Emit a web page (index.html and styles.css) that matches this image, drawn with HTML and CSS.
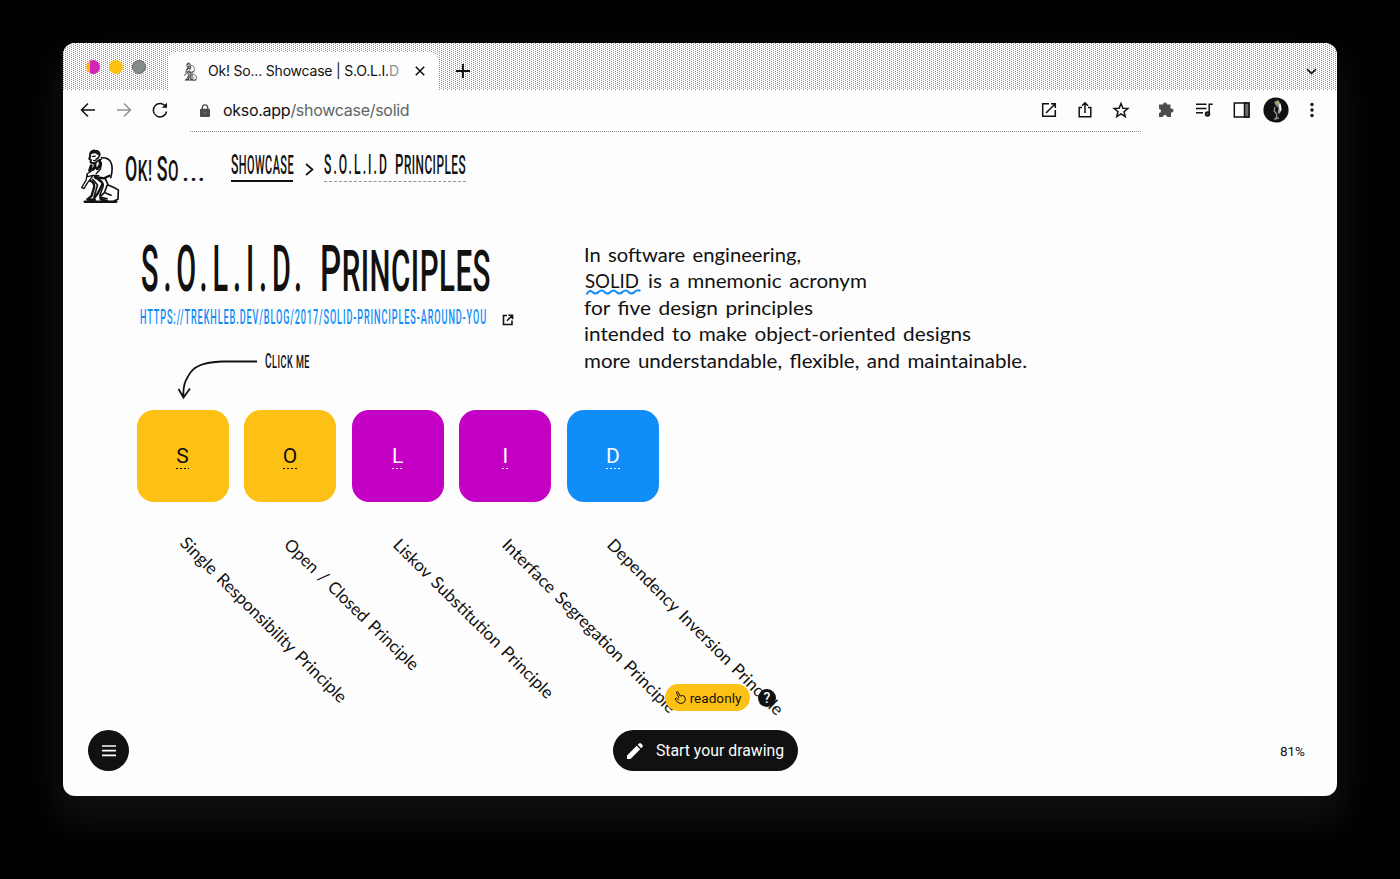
FILE: index.html
```html
<!DOCTYPE html>
<html lang="en">
<head>
<meta charset="utf-8">
<title>Ok! So... Showcase | S.O.L.I.D</title>
<link rel="stylesheet" href="styles.css">
</head>
<body>
<svg class="defs" width="0" height="0" aria-hidden="true">
  <symbol id="thinker" viewBox="32 22 118 168">
    <g fill="none" stroke="#111" stroke-linecap="round" stroke-linejoin="round">
      <path stroke-width="6" d="M59 45c-2-10 6-17 15-16 11 0 16 7 14 15M63 37c7-4 15-3 20 2M60 45l-3 9 5 3-1 8 8 2"/>
      <path stroke-width="4" d="M67 47l8-1M88 44c-2 8-5 10-11 12M70 59l9 2M94 55c-7 2-14 5-18 13"/>
      <path stroke-width="5" d="M94 51c15-1 24 4 29 15 5 13 4 28-1 45"/>
      <path stroke-width="9" d="M73 68c3 7 2 14-5 18M88 60c5 8 2 17-7 24M63 75l-5 14"/>
      <path stroke-width="4" d="M94 68l-3 17-13 14M64 91l-14 9 2 8 17-4 17 1M50 101l-2 16-14 24 7 3 11-18 14-18"/>
      <path stroke-width="7" d="M118 105l-16 8-28-4M76 112c14 5 20 9 21 18l-14 28-12 16M59 120c8 3 14 9 13 19l-8 27-12 11"/>
      <path stroke-width="5" d="M85 119c12 6 18 13 13 21l-9 24M67 116l15 17-10 34M105 113l9 20 16 7 15 8-1 28-11 5M111 134l-8 22 20 8M101 158l-12 12 22 5"/>
      <path stroke-width="7" d="M43 184h96M52 176l22 2M91 175l22 8"/>
    </g>
  </symbol>
</svg>

<main class="window">
  <div class="tabstrip">
    <div class="lights"><i class="light close"></i><i class="light min"></i><i class="light max"></i></div>
    <div class="tab">
      <svg class="favicon" width="13" height="19"><use href="#thinker"/></svg>
      <span class="tab-title">Ok! So... Showcase | S.O.L.I.<span class="faded">D</span></span>
      <svg class="tab-close" width="10" height="10" viewBox="0 0 10 10"><path d="M.8.8l8.4 8.4M9.2.8L.8 9.2" stroke="#111" stroke-width="1.6"/></svg>
    </div>
    <svg class="new-tab" width="14" height="14" viewBox="0 0 14 14"><path d="M7 0v14M0 7h14" stroke="#111" stroke-width="1.9"/></svg>
    <svg class="tab-menu" width="11" height="7" viewBox="0 0 11 7"><path d="M1 1l4.5 4.5L10 1" fill="none" stroke="#111" stroke-width="1.7"/></svg>
  </div>

  <div class="toolbar">
    <svg class="icon" width="16" height="16" viewBox="0 0 16 16"><path d="M15 8H2M8 1.500L1.500 8 8 14.500"/></svg>
    <svg class="icon dim" width="16" height="16" viewBox="0 0 16 16"><path d="M1 8h13M8 1.500L14.500 8 8 14.500"/></svg>
    <svg class="icon" width="16" height="16" viewBox="0 0 16 16"><path d="M13.900 5A6.700 6.700 0 1 0 14.600 9.500"/><path d="M15 .8v5H9.800z" fill="#111" stroke="none"/></svg>
    <svg class="lock" width="10" height="13" viewBox="0 0 10 13"><path d="M2.300 6V3.500a2.700 2.700 0 0 1 5.400 0V6" fill="none" stroke="#4a4e4e" stroke-width="1.300"/><rect y="4.700" width="10" height="8.300" rx="1" fill="#4a4e4e"/><circle cx="5" cy="8.800" r="1.100" fill="#777"/></svg>
    <span class="url">okso.app<span class="path">/showcase/solid</span></span>
    <div class="actions">
      <svg class="icon" width="16" height="16" viewBox="0 0 16 16"><path d="M8 1.700H1.700v12.600h12.600V8M10 1.700h4.300V6M14.300 1.700L5 11"/></svg>
      <svg class="icon" width="16" height="16" viewBox="0 0 16 16"><path d="M5 5.500H2.200v9.300h11.600V5.500H11M8 11V1M5 3.800L8 .9l3 2.900"/></svg>
      <svg class="icon" width="16" height="16" viewBox="0 0 16 16"><path d="M8 1.500l1.900 4.700 5 .3-3.900 3.200 1.300 4.900L8 11.900l-4.300 2.700L5 9.700 1.100 6.500l5-.3z"/></svg>
      <svg class="puzzle" width="18" height="18" viewBox="0 0 18 18"><path d="M6 3.500a2 2 0 0 1 4 0h3.500V7.500h1a2 2 0 0 1 0 4l-.5.200V16h-4a2 2 0 0 0-4 0H2v-4a2 2 0 0 0 0-4V3.500z" fill="#4a4e4e"/></svg>
      <svg class="icon" width="18" height="16" viewBox="0 0 18 16"><path d="M1 2.200h10.500M1 6.500h10.500M1 10.800h7M14.200 12V2.200h3.500"/><circle cx="12.500" cy="12" r="2" fill="#4a4e4e"/></svg>
      <svg class="icon" width="17" height="16" viewBox="0 0 17 16"><path d="M1.300 1h14.500v14H1.300z"/><path d="M11.500 1h4.500v14h-4.500z" fill="#6a7070"/></svg>
      <svg class="avatar" width="26" height="26" viewBox="0 0 26 26"><circle cx="13" cy="13" r="12.600" fill="#111"/><path d="M11 5l4-2 3 4 .5 6-2 4-2-1 1-5-3-3z" fill="#8d9494"/><path d="M16 7l2 1 .3 5-1.500 2z" fill="#fdfdfd"/><path d="M12 10l-1 4 2 2 1 3-2 3 4-1" fill="none" stroke="#8d9494" stroke-width="1.300"/><path d="M14 5.500l2 .8" stroke="#fdc014"/></svg>
      <svg class="more" width="4" height="16" viewBox="0 0 4 16"><g fill="#111"><circle cx="2" cy="2.500" r="1.700"/><circle cx="2" cy="8" r="1.700"/><circle cx="2" cy="13.500" r="1.700"/></g></svg>
    </div>
  </div>
  <div class="rule"></div>

  <section class="page">
    <header class="crumbs">
      <svg width="39" height="56"><use href="#thinker"/></svg>
      <svg class="brand lettering" width="84" height="44"><text x="1" y="31" textLength="54" lengthAdjust="spacingAndGlyphs"><tspan font-size="35">O</tspan><tspan font-size="30">K! </tspan><tspan font-size="35">S</tspan><tspan font-size="30">O</tspan></text><text x="58" y="31" font-size="26" textLength="24">...</text></svg>
      <a class="crumb current"><svg class="lettering" width="62" height="26"><text x="0" y="24" textLength="63" lengthAdjust="spacingAndGlyphs"><tspan font-size="28">S</tspan><tspan font-size="25">HOWCASE</tspan></text></svg></a>
      <svg class="chevron" width="9" height="13" viewBox="0 0 9 13"><path d="M1 1l6.500 5.500L1 12" fill="none" stroke="#111" stroke-width="1.700"/></svg>
      <a class="crumb dotted"><svg class="lettering" width="142" height="26"><text class="initials" x="0" y="24" font-size="28" textLength="65" lengthAdjust="spacingAndGlyphs">S.O.L.I.D</text><text x="71" y="24" textLength="71" lengthAdjust="spacingAndGlyphs"><tspan font-size="28">P</tspan><tspan font-size="25">RINCIPLES</tspan></text></svg></a>
    </header>

    <div class="canvas">
      <svg class="drawing" width="1274" height="665" viewBox="63 131 1274 665">
        <g class="lettering">
          <text class="initials" x="141" y="291" font-size="65" textLength="166" lengthAdjust="spacingAndGlyphs">S.O.L.I.D.</text>
          <text x="320" y="291" textLength="171" lengthAdjust="spacingAndGlyphs"><tspan font-size="65">P</tspan><tspan font-size="58">RINCIPLES</tspan></text>
          <text class="link" x="140" y="324" font-size="20.500" textLength="347" lengthAdjust="spacingAndGlyphs">HTTPS://TREKHLEB.DEV/BLOG/2017/SOLID-PRINCIPLES-AROUND-YOU</text>
          <text x="265" y="368" textLength="45" lengthAdjust="spacingAndGlyphs"><tspan font-size="20">C</tspan><tspan font-size="18">LICK ME</tspan></text>
        </g>
        <g fill="none" stroke="#111" stroke-width="1.600">
          <path d="M507 315.500h-3.500v9h8.500v-4M508.500 315.200h4v4M512.500 315.200l-5.500 5.500"/>
          <path d="M257 361.500h-35c-18 1-29 4-34 15-4 6-5 13-4.500 20M178.500 389l5 8.500 6.500-9" stroke-width="1.800"/>
        </g>
        <g class="hand">
          <text x="584" y="262" textLength="217" lengthAdjust="spacingAndGlyphs">In software engineering,</text>
          <text x="585" y="288" textLength="54" lengthAdjust="spacingAndGlyphs">SOLID</text>
          <text x="648" y="288" textLength="219" lengthAdjust="spacingAndGlyphs">is a mnemonic acronym</text>
          <text x="584" y="314.500" textLength="229" lengthAdjust="spacingAndGlyphs">for five design principles</text>
          <text x="584" y="341" textLength="387" lengthAdjust="spacingAndGlyphs">intended to make object-oriented designs</text>
          <text x="584" y="367.500" textLength="443" lengthAdjust="spacingAndGlyphs">more understandable, flexible, and maintainable.</text>
        </g>
        <path class="squiggle" d="M586.500 294.500q3-5.500 6-2.500t6 0 6 0 6 0 6 0 6 0 6 0 6 0 6-1"/>
        <g class="hand slanted">
          <text transform="translate(179 544) rotate(44.800)" textLength="227" lengthAdjust="spacingAndGlyphs">Single Responsibility Principle</text>
          <text transform="translate(283 546) rotate(44.200)" textLength="180" lengthAdjust="spacingAndGlyphs">Open / Closed Principle</text>
          <text transform="translate(392 546) rotate(44.800)" textLength="218" lengthAdjust="spacingAndGlyphs">Liskov Substitution Principle</text>
          <text transform="translate(501 546) rotate(45)" textLength="238" lengthAdjust="spacingAndGlyphs">Interface Segregation Principle</text>
          <text transform="translate(606 546) rotate(45)" textLength="241" lengthAdjust="spacingAndGlyphs">Dependency Inversion Principle</text>
        </g>
      </svg>
      <div class="cards">
        <a class="card yellow"><span>S</span></a>
        <a class="card yellow"><span>O</span></a>
        <a class="card purple"><span>L</span></a>
        <a class="card purple"><span>I</span></a>
        <a class="card blue"><span>D</span></a>
      </div>
    </div>

    <div class="status">
      <span class="readonly"><svg width="12" height="13" viewBox="0 0 12 13"><path d="M5 7L2.700 2.300q-.8-1.200.3-1.500t1.300.7L6 5q2.500-1 4.500.300 1 2 .7 4.200-1 3-4.500 3-3.200 0-5.700-4.500L2.300 7 5 9" fill="none" stroke="#111"/></svg>readonly</span>
      <span class="help">?</span>
    </div>
    <footer class="controls">
      <span class="menu"><svg width="14" height="12" viewBox="0 0 14 12"><path d="M0 1h14M0 5.700h14M0 10.400h14" stroke="#fdfdfd" stroke-width="1.700"/></svg></span>
      <span class="start"><svg width="16" height="16" viewBox="0 0 16 16"><path d="M0 16v-3.500L9.700 2.800l3.500 3.500L3.500 16zM10.700 1.800L12 .5q1-.8 2 0L15.500 2q.8 1 0 2l-1.300 1.300z" fill="#fdfdfd"/></svg>Start your drawing</span>
      <span class="zoom">81%</span>
    </footer>
  </section>
</main>
</body>
</html>
```

FILE: styles.css
```css
* { box-sizing: border-box; }

body {
  margin: 0;
  height: 879px;
  padding: 43px 63px 83px;
  overflow: hidden;
  background: #000;
  color: #111;
  font-family: Roboto, sans-serif;
}

svg { display: block; flex: none; overflow: visible; }
.defs { position: absolute; }

.window {
  height: 753px;
  display: flex;
  flex-direction: column;
  border-radius: 12px;
  overflow: hidden;
  background: #fdfdfd;
  box-shadow: 0 20px 34px 8px #101010;
}

.tabstrip {
  height: 47px;
  flex: none;
  display: flex;
  align-items: center;
  padding: 0 20px 0 23px;
  background-color: #fdfdfd;
  background-image:
    conic-gradient(from 270deg at 1px 1px, #8d9494 90deg, transparent 0),
    conic-gradient(from 270deg at 1px 1px, #8d9494 90deg, transparent 0);
  background-size: 4px 2px, 4px 2px;
  background-position: 0 0, 2px 1px;
}

.lights { display: flex; gap: 9px; width: 82px; }
.light { width: 14px; height: 14px; border-radius: 50%; }
.close { background: linear-gradient(90deg, #fdb52c 4px, #d426b4 4px); }
.min { background: #fdc014; }
.max { background: #858c8c; border: 1px solid #606666; }

.tab {
  align-self: flex-end;
  width: 270px;
  height: 38px;
  display: flex;
  align-items: center;
  padding: 0 13px 0 16px;
  border-radius: 8px 8px 0 0;
  background: #fdfdfd;
}
.tab-title {
  margin: -2px 0 0 11px;
  flex: 1;
  white-space: nowrap;
  font: 14px Inter, sans-serif;
  letter-spacing: -0.2px;
}
.faded { color: #8d9494; }
.new-tab { margin: 8px auto 0 18px; }
.tab-menu { margin-top: 9px; }

.toolbar {
  height: 41px;
  flex: none;
  display: flex;
  align-items: center;
  gap: 20px;
  padding: 0 23px 1px 17px;
}
.icon { fill: none; stroke: #111; stroke-width: 1.5; }
.dim { stroke: #8d9494; }
.lock { margin-left: 12px; }
.url { margin-left: -7px; font: 16px Inter, sans-serif; letter-spacing: -0.28px; }
.path { color: #5f6565; }
.actions { display: flex; align-items: center; margin-left: auto; gap: 20px; }
.puzzle { margin-left: 8px; }
.icon + .avatar { margin: 0 1px 0 -7px; }

.rule {
  flex: none;
  width: 952px;
  height: 1px;
  margin-left: 127px;
  background: repeating-linear-gradient(90deg, #8d9494 0 1px, transparent 1px 2px);
}

.page {
  position: relative;
  flex: 1;
  display: flex;
  flex-direction: column;
}

.lettering { font-family: Roboto, sans-serif; font-weight: 500; letter-spacing: 0.06em; fill: #111; }
.initials { letter-spacing: 0.17em; }
.hand { font-family: Lato, sans-serif; font-size: 18.500px; word-spacing: 2px; fill: #111; }
.slanted { font-size: 17px; }
.link { fill: #118df8; letter-spacing: 0.1em; }

.crumbs {
  height: 88px;
  display: flex;
  align-items: flex-start;
  padding: 16px 0 0 18px;
}
.brand { margin-left: 4px; margin-top: 2px; }
.crumb { height: 32px; margin-top: 2px; }
.current { margin-left: 23px; border-bottom: 2px solid #111; }
.chevron { margin: 15px 10px 0 12px; }
.dotted { border-bottom: 1px dashed #8d9494; }

.canvas { padding: 190px 0 0 73.500px; }
.drawing { position: absolute; left: 0; top: -1px; }
.squiggle { fill: none; stroke: #118df8; stroke-width: 2; }

.cards { display: flex; gap: 15.600px; }
.card {
  width: 92px;
  height: 92px;
  display: grid;
  place-items: center;
  border-radius: 17px;
  font-size: 21px;
}
.card span {
  line-height: 25px;
  background: repeating-linear-gradient(90deg, currentColor 0 2px, transparent 2px 4px) 0 100% / 100% 1px no-repeat;
}
.yellow { background: #fdc014; }
.purple { background: #c500c5; color: #fdfdfd; }
.blue { background: #118dfa; color: #fdfdfd; }

.status {
  position: relative;
  display: flex;
  justify-content: center;
  align-items: center;
  gap: 8px;
  margin-top: auto;
  padding-left: 41px;
  margin-bottom: 19px;
}
.readonly {
  width: 85px;
  height: 27px;
  display: flex;
  align-items: center;
  justify-content: center;
  gap: 4px;
  border-radius: 14px;
  background: #fdc014;
  font-size: 13.600px;
}
.help {
  width: 18px;
  height: 18px;
  border-radius: 50%;
  background: #111;
  color: #fdfdfd;
  font-size: 14px;
  font-weight: 500;
  line-height: 18px;
  text-align: center;
}

.controls {
  position: relative;
  display: grid;
  grid-template-columns: 525px 185px 1fr;
  align-items: center;
  padding: 0 32px 25px 25px;
}
.menu {
  width: 41px;
  height: 41px;
  display: grid;
  place-items: center;
  border-radius: 50%;
  background: #111;
}
.start {
  height: 41px;
  display: flex;
  align-items: center;
  justify-content: center;
  gap: 13px;
  border-radius: 21px;
  background: #111;
  color: #fdfdfd;
  font-size: 15.800px;
}
.zoom { justify-self: end; font-size: 13.500px; }
```
